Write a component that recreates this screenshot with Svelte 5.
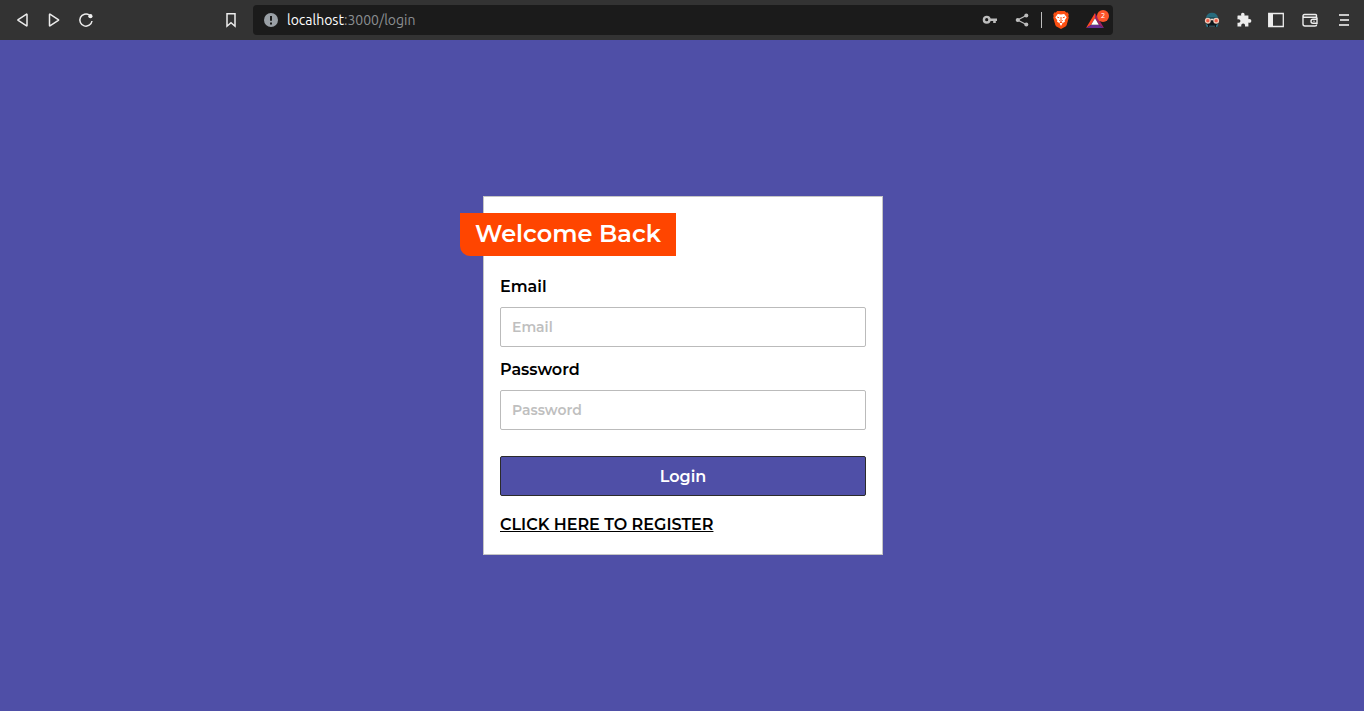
<script>
  let email = $state('');
  let password = $state('');
</script>

<div class="window">
  <header class="toolbar">
    <nav class="navigation" aria-label="Navigation">
      <button aria-label="Back"><svg viewBox="0 0 16 16"><path d="M13 2.6v10.8q0 .8-.8.3L4.2 8.5q-.7-.5 0-1l8-5.2q.8-.5.8.3Z" /></svg></button>
      <button aria-label="Forward"><svg viewBox="0 0 16 16"><path d="M3.5 2.6v10.8q0 .8.8.3l8-5.2q.7-.5 0-1L4.3 2.3q-.8-.5-.8.3Z" /></svg></button>
      <button aria-label="Reload"><svg viewBox="0 0 16 16"><path d="M11.4 3A6.1 6.1 0 1 0 14 9" /><circle cx="12.4" cy="4.2" r="2.1" fill="#f0f0f0" stroke="none" /></svg></button>
    </nav>
    <button class="bookmark" aria-label="Bookmark"><svg viewBox="0 0 16 16"><path d="M4 1.8h8v12.4l-4-3.4-4 3.4Z" /></svg></button>
    <div class="address">
      <button aria-label="Site information"><svg viewBox="0 0 16 16"><circle cx="8" cy="8" r="7" fill="#9aa0a6" stroke="none" /><path d="M8 4v4.8M8 10.5v2" stroke="#1b1b1b" stroke-width="2" /></svg></button>
      <span class="url">localhost<span class="path">:3000/login</span></span>
      <div class="address-actions">
        <button aria-label="Passwords"><svg viewBox="0 0 16 16"><g stroke="#bdbdbd"><circle cx="4.7" cy="7.7" r="2.8" stroke-width="2.4" /><path d="M7.5 7.7H15M12.5 7.7v3.2" stroke-width="2.6" /></g></svg></button>
        <button aria-label="Share"><svg viewBox="0 0 16 16"><path d="M12.3 3.5 3.6 8l8.7 4.5" stroke="#bdbdbd" stroke-width="1.3" /><g fill="#bdbdbd" stroke="none"><circle cx="12.3" cy="3.5" r="2" /><circle cx="3.8" cy="8" r="2.1" /><circle cx="12.3" cy="12.5" r="2" /></g></svg></button>
        <span class="divider"></span>
        <button class="shields" aria-label="Shields">
          <svg viewBox="0 0 18 20"><path d="M5.3 1h7.4l1.6 1.6 1.5-.1 1 2.2-.5 1.4.5 1.5-2.2 7.6-1 1.4L9 19l-4.6-2.4-1-1.4-2.2-7.6.5-1.5-.5-1.4 1-2.2 1.5.1Z" fill="#fb4f12" stroke="none" /><path d="m5.8 3.9 3.2.6 3.2-.6 2.5 3.3-2 3.1.2 1.5-2.2 1.3L9 15.9l-1.7-2.8-2.2-1.3.2-1.5-2-3.1Z" fill="#fff" stroke="none" /><path d="m5.2 7.1 2 .7m5.6-.7-2 .7M9 7v3.4m-1.7 0L9 11.4l1.7-1M7.4 13.2 9 12.2l1.6 1" stroke="#fb4f12" stroke-width="1" /></svg>
        </button>
        <button class="rewards" aria-label="Rewards, 2 new">
          <svg viewBox="0 0 20 18"><path d="M10 2 1 17l5-3 4-7Z" fill="#ff4724" stroke="none" /><path d="m10 2 9 15-5-3-4-7Z" fill="#9e1f63" stroke="none" /><path d="M1 17h18l-5-3H6Z" fill="#662d91" stroke="none" /><path d="m10 7.3 3.8 6.4H6.2Z" fill="#fff" stroke="none" /></svg>
          <span class="count">2</span>
        </button>
      </div>
    </div>
    <div class="extensions">
      <button aria-label="Profile extension"><svg viewBox="0 0 16 16"><g stroke="none"><path d="M2 8V5.5Q3 .8 8 .8t6 4.7V8Z" fill="#276b7d" /><path d="M3 5.5h10v1H3Z" fill="#17333d" /><path d="M2 8.5h12V15H2Z" fill="#0d151a" /><path d="M1.5 11.5 4 13v2H2.5Zm13 0L12 13v2h1.5Z" fill="#2f7284" /><path d="M5.5 13.5h1v1.5h-1zm2 0h1v1.5h-1zm2 0h1v1.5h-1z" fill="#56808b" /></g><g fill="#ef5945" stroke="#efc9b8" stroke-width="1.3"><circle cx="3.8" cy="8.7" r="2.3" /><circle cx="12.2" cy="8.7" r="2.3" /></g><path d="M6.5 7.5h3" stroke="#efd8cb" /></svg></button>
      <button aria-label="Extensions"><svg viewBox="0 0 16 16"><path d="M2 3.5h3.3C4.6 1.8 5.5.7 6.8.7s2.3 1.1 1.6 2.8h4v3.7c1.8-.5 2.9.3 2.9 1.7s-1.1 2.3-2.9 1.7v4H9c.4-1.9-.5-3-1.8-3s-2.3 1.1-1.9 3H1.5v-3.9c1.8.4 2.9-.5 2.9-1.7S3.3 7 1.5 7.4V4q0-.5.5-.5Z" fill="#ededed" stroke="none" /></svg></button>
      <button aria-label="Sidebar"><svg viewBox="0 0 16 16"><path d="M.7 1.5h14.6v13H.7Z" stroke-width="1.3" /><path d="M1 2h4v12H1Z" fill="#ededed" stroke="none" /></svg></button>
      <button aria-label="Wallet"><svg viewBox="0 0 16 16"><path d="M14.5 5V3.5q0-1-1-1h-11Q1 2.5 1 4v8q0 2 2 2h10q1.7 0 1.7-1.5M1 4q0 1.2 2 1.2h10.5q1.7 0 1.7 1.5M15 7.2h-4q-2 0-2 2t2 2h4ZM11.5 9.2h1" stroke-width="1.4" /></svg></button>
      <button aria-label="Menu"><svg viewBox="0 0 16 16"><path d="M3 3h10M4 8h9M3 13h10" stroke="#c9c9c9" stroke-width="1.8" /></svg></button>
    </div>
  </header>

  <main>
    <form class="card" onsubmit={(event) => event.preventDefault()}>
      <h1>Welcome Back</h1>
      <div class="field">
        <label for="email">Email</label>
        <input id="email" type="email" placeholder="Email" bind:value={email} />
      </div>
      <div class="field">
        <label for="password">Password</label>
        <input id="password" type="password" placeholder="Password" bind:value={password} />
      </div>
      <button class="login" type="submit">Login</button>
      <a href="#register">CLICK HERE TO REGISTER</a>
    </form>
  </main>
</div>

<style>
  :global(body) { margin: 0; }
  * { box-sizing: border-box; }
  .window {
    display: flex;
    flex-direction: column;
    min-height: 100vh;
    background: #4f4fa7;
    font-family: Montserrat, Inter, sans-serif;
    color: #000;
  }
  .toolbar {
    display: flex;
    align-items: center;
    height: 40px;
    padding: 0 12px 0 14px;
    background: #333;
  }
  .toolbar button {
    display: flex;
    flex: none;
    padding: 0;
    border: 0;
    background: none;
  }
  svg {
    width: 16px;
    height: 16px;
    fill: none;
    stroke: #ededed;
    stroke-width: 1.5;
  }
  .navigation, .extensions { display: flex; gap: 16px; }
  .navigation { flex: 1 1 0; }
  .bookmark { margin-right: 14px; }
  .address {
    display: flex;
    align-items: center;
    flex: 0 1 860px;
    height: 30px;
    padding: 0 6px 0 10px;
    border-radius: 4px;
    background: #1b1b1b;
  }
  .url {
    margin-left: 8px;
    color: #fff;
    font: 14px/20px Ubuntu, "Noto Sans", sans-serif;
  }
  .path { color: #8b8f92; }
  .address-actions {
    display: flex;
    align-items: center;
    margin-left: auto;
  }
  .address-actions > button + button { margin-left: 16px; }
  .divider {
    width: 1px;
    height: 16px;
    margin: 0 10px 0 11px;
    background: #bdbdbd;
  }
  .shields svg { width: 18px; height: 20px; }
  .toolbar .address-actions .rewards { position: relative; width: 22px; margin-left: 15px; }
  .rewards svg { width: 20px; height: 18px; }
  .count {
    position: absolute;
    top: -1px;
    right: -2px;
    width: 12px;
    height: 12px;
    border-radius: 50%;
    background: #fb542b;
    color: #fff;
    font: 7px/12px "Noto Sans", sans-serif;
    text-align: center;
  }
  .extensions { flex: 1 1 30px; justify-content: flex-end; }
  .extensions button:nth-child(n + 4) { margin-left: 2px; }
  main {
    display: flex;
    flex: 1;
    align-items: center;
    justify-content: center;
    padding: 24px 40px 24px 42px;
  }
  .card {
    display: flex;
    flex-direction: column;
    width: 100%;
    max-width: 400px;
    padding: 16px;
    border: 1px solid #c5c5c5;
    background: #fff;
  }
  h1 {
    align-self: flex-start;
    margin: 0 0 18px -40px;
    padding: 6px 15px 7px;
    border-bottom-left-radius: 10px;
    background: #ff4500;
    color: #fff;
    font-size: 24px;
    font-weight: 600;
    line-height: 30px;
  }
  .field {
    display: flex;
    flex-direction: column;
    gap: 7px;
  }
  .field + .field { margin-top: 10px; }
  label, .login, .card a {
    font-size: 16px;
    font-weight: 600;
    line-height: 26px;
  }
  input {
    height: 40px;
    padding: 0 11px;
    border: 1px solid #bbb;
    border-radius: 2px;
    background: #fff;
    font: 600 14px Montserrat, Inter, sans-serif;
  }
  input::placeholder { color: #bfbfbf; opacity: 1; }
  .login {
    height: 40px;
    margin-top: 26px;
    padding: 2px 16px 0;
    border: 1px solid #2b2b2b;
    border-radius: 2px;
    background: #4f4fa7;
    color: #fff;
    font-family: inherit;
  }
  .card a {
    align-self: flex-start;
    margin-top: 16px;
    color: #000;
  }
</style>
